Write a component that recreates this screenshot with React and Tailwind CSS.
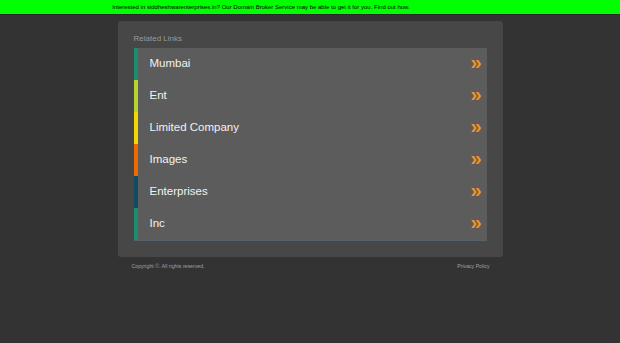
const links = [
  { name: "Mumbai", color: "border-[#1d8b6d]" },
  { name: "Ent", color: "border-[#b7d433]" },
  { name: "Limited Company", color: "border-[#f3d700]" },
  { name: "Images", color: "border-[#ee6a00]" },
  { name: "Enterprises", color: "border-[#0d4c60]" },
  { name: "Inc", color: "border-[#1d8b6d]" },
]

export default function App() {
  return (
    <div className="min-h-[343px] bg-[#333333] font-['Liberation_Sans',Arial,sans-serif]">
      <div className="h-[15px] bg-[#00ff00] border-b border-[#2a2a2a] flex items-center justify-center pr-[98px]">
        <a href="#" className="text-[6px] text-black leading-none">
          Interested in siddheshwarenterprises.in? Our Domain Broker Service may be able to get it for you. Find out how.
        </a>
      </div>

      <div className="w-[385px] mx-auto mt-[6px]">
        <div className="bg-[#474747] rounded-[3px] px-4 pt-[14px] pb-4">
          <p className="text-[8px] text-[#9a9a9a] leading-none mb-[5px]">Related Links</p>
          <ul className="border-b border-[#56626a]">
            {links.map((l) => (
              <li key={l.name} className={"h-8 bg-[#5c5c5c] border-l-4 flex items-center justify-between pl-3 pr-[5px] " + l.color}>
                <span className="text-[11.5px] text-[#f2f2f2]">{l.name}</span>
                <span className="text-[20px] font-bold text-[#ee922a] leading-none -mt-[5px]">»</span>
              </li>
            ))}
          </ul>
        </div>

        <div className="flex justify-between px-[14px] pt-[6px] pr-[13px]">
          <span className="text-[5.2px] text-[#a0a0a0]">Copyright ©. All rights reserved.</span>
          <a href="#" className="text-[5.2px] text-[#a0a0a0]">Privacy Policy</a>
        </div>
      </div>
    </div>
  )
}
